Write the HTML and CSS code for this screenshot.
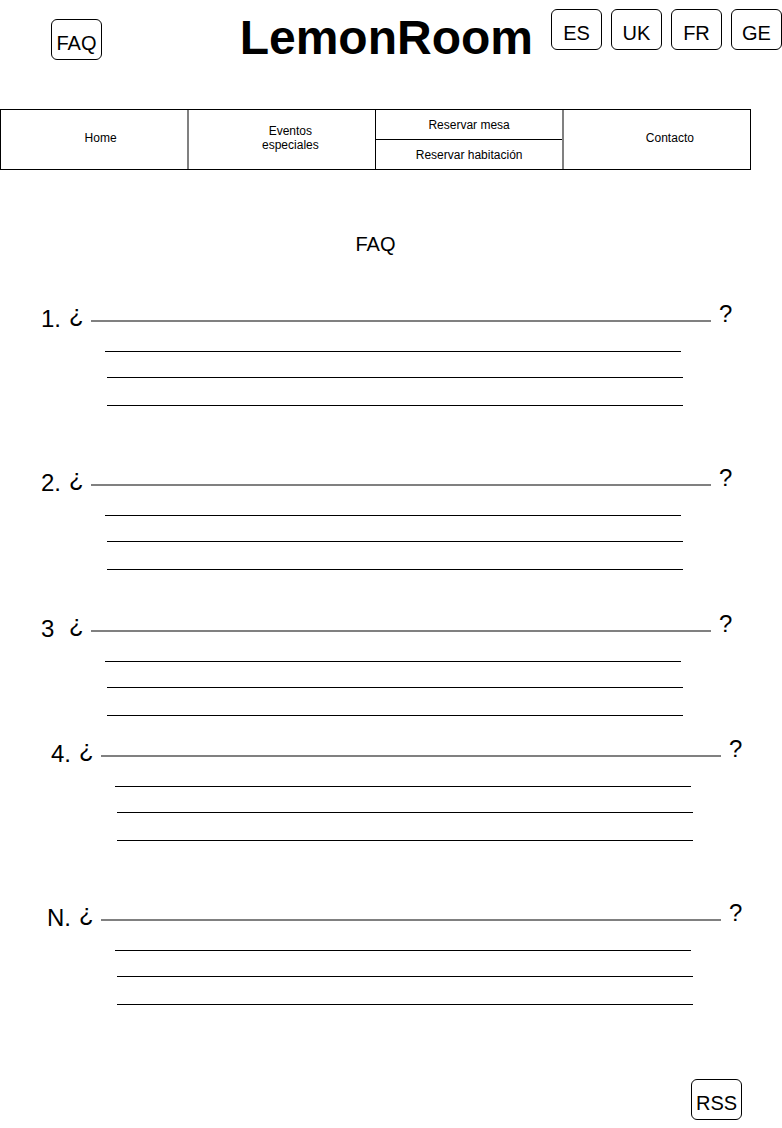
FILE: index.html
```html
<!DOCTYPE html>
<html lang="es">
<head>
<meta charset="utf-8">
<meta name="viewport" content="width=device-width, initial-scale=1">
<title>LemonRoom - FAQ</title>
<link rel="stylesheet" href="styles.css">
</head>
<body>
<header class="header">
  <button class="box-button header__faq" type="button">FAQ</button>
  <h1 class="header__title">LemonRoom</h1>
  <div class="languages">
    <button class="box-button" type="button">ES</button>
    <button class="box-button" type="button">UK</button>
    <button class="box-button" type="button">FR</button>
    <button class="box-button" type="button">GE</button>
  </div>
</header>
<nav class="menu">
  <a class="menu__cell" href="#">Home</a>
  <a class="menu__cell menu__cell--ruled" href="#">Eventos<br>especiales</a>
  <div class="menu__split">
    <a class="menu__half" href="#">Reservar mesa</a>
    <a class="menu__half" href="#">Reservar habitación</a>
  </div>
  <a class="menu__cell menu__cell--ruled menu__cell--last" href="#">Contacto</a>
</nav>
<main class="main">
  <h2 class="main__title">FAQ</h2>
  <ol class="faq">
    <li class="faq__item">
      <div class="question"><span class="question__number">1.</span><span>¿</span><span class="question__line"></span><span>?</span></div>
      <div class="answer"><div class="answer__line"></div><div class="answer__line"></div><div class="answer__line"></div></div>
    </li>
    <li class="faq__item faq__item--spaced">
      <div class="question"><span class="question__number">2.</span><span>¿</span><span class="question__line"></span><span>?</span></div>
      <div class="answer"><div class="answer__line"></div><div class="answer__line"></div><div class="answer__line"></div></div>
    </li>
    <li class="faq__item faq__item--medium">
      <div class="question"><span class="question__number">3&nbsp;</span><span>¿</span><span class="question__line"></span><span>?</span></div>
      <div class="answer"><div class="answer__line"></div><div class="answer__line"></div><div class="answer__line"></div></div>
    </li>
    <li class="faq__item faq__item--tight faq__item--inset">
      <div class="question"><span class="question__number">4.</span><span>¿</span><span class="question__line"></span><span>?</span></div>
      <div class="answer"><div class="answer__line"></div><div class="answer__line"></div><div class="answer__line"></div></div>
    </li>
    <li class="faq__item faq__item--spaced faq__item--inset">
      <div class="question"><span class="question__number">N.</span><span>¿</span><span class="question__line"></span><span>?</span></div>
      <div class="answer"><div class="answer__line"></div><div class="answer__line"></div><div class="answer__line"></div></div>
    </li>
  </ol>
</main>
<footer class="footer">
  <button class="box-button" type="button">RSS</button>
</footer>
</body>
</html>
```

FILE: styles.css
```css
* {
  box-sizing: border-box;
}

body {
  margin: 0;
  background: #fff;
  color: #000;
  font-family: "Liberation Sans", Arial, Helvetica, sans-serif;
}

.box-button {
  width: 51px;
  height: 41px;
  padding: 6px 0 0;
  border: 1px solid #000;
  border-radius: 6px;
  background: #fff;
  color: #000;
  font-family: inherit;
  font-size: 20px;
  line-height: 24px;
}

.header {
  display: flex;
  align-items: flex-start;
  gap: 18px;
  min-height: 109px;
  padding: 9px 0 0 51px;
}

.header__faq {
  margin-top: 10px;
}

.header__title {
  margin: 0 0 0 auto;
  font-size: 48px;
  line-height: 58px;
}

.languages {
  display: flex;
  gap: 9px;
}

.menu {
  display: grid;
  grid-template-columns: repeat(4, 1fr);
  min-height: 61px;
  margin-right: 31px;
  border: 1px solid #000;
  font-size: 12px;
  line-height: 14px;
  text-align: center;
}

.menu a {
  color: inherit;
  text-decoration: none;
}

.menu__cell {
  display: grid;
  place-items: center;
  padding: 0 0 4px 12px;
}

.menu__cell--ruled {
  margin-left: -1px;
  padding-left: 16px;
  border-left: 2px solid #808080;
}

.menu__cell--last {
  padding-left: 26px;
}

.menu__split {
  display: grid;
  grid-template-rows: 29px 1fr;
  margin-left: -1px;
  border-left: 1px solid #000;
}

.menu__half {
  display: grid;
  place-items: center;
}

.menu__half + .menu__half {
  border-top: 1px solid #000;
}

.main {
  margin-right: 31px;
  padding-top: 62px;
}

.main__title {
  margin: 0 0 44px;
  font-size: 20px;
  font-weight: 400;
  line-height: 24px;
  text-align: center;
}

.faq {
  margin: 0;
  padding: 0;
  list-style: none;
}

.faq__item--spaced {
  margin-top: 58px;
}

.faq__item--medium {
  margin-top: 40px;
}

.faq__item--tight {
  margin-top: 19px;
}

.faq__item--inset {
  margin-right: -10px;
  margin-left: 10px;
}

.question {
  display: grid;
  grid-template-columns: 61px 14px 1fr 14px;
  column-gap: 8px;
  padding-right: 18px;
  font-size: 24px;
  line-height: 28px;
}

.question__number {
  padding-top: 5px;
  text-align: right;
}

.question__line {
  height: 2px;
  margin-top: 20px;
  background: #808080;
}

.answer {
  padding: 18px 68px 0 107px;
}

.answer__line {
  height: 1px;
  background: #000;
}

.answer__line:first-child {
  margin: 0 2px 25px -2px;
}

.answer__line:last-child {
  margin-top: 27px;
}

.footer {
  display: flex;
  justify-content: flex-end;
  padding: 74px 40px 8px 0;
}
```
